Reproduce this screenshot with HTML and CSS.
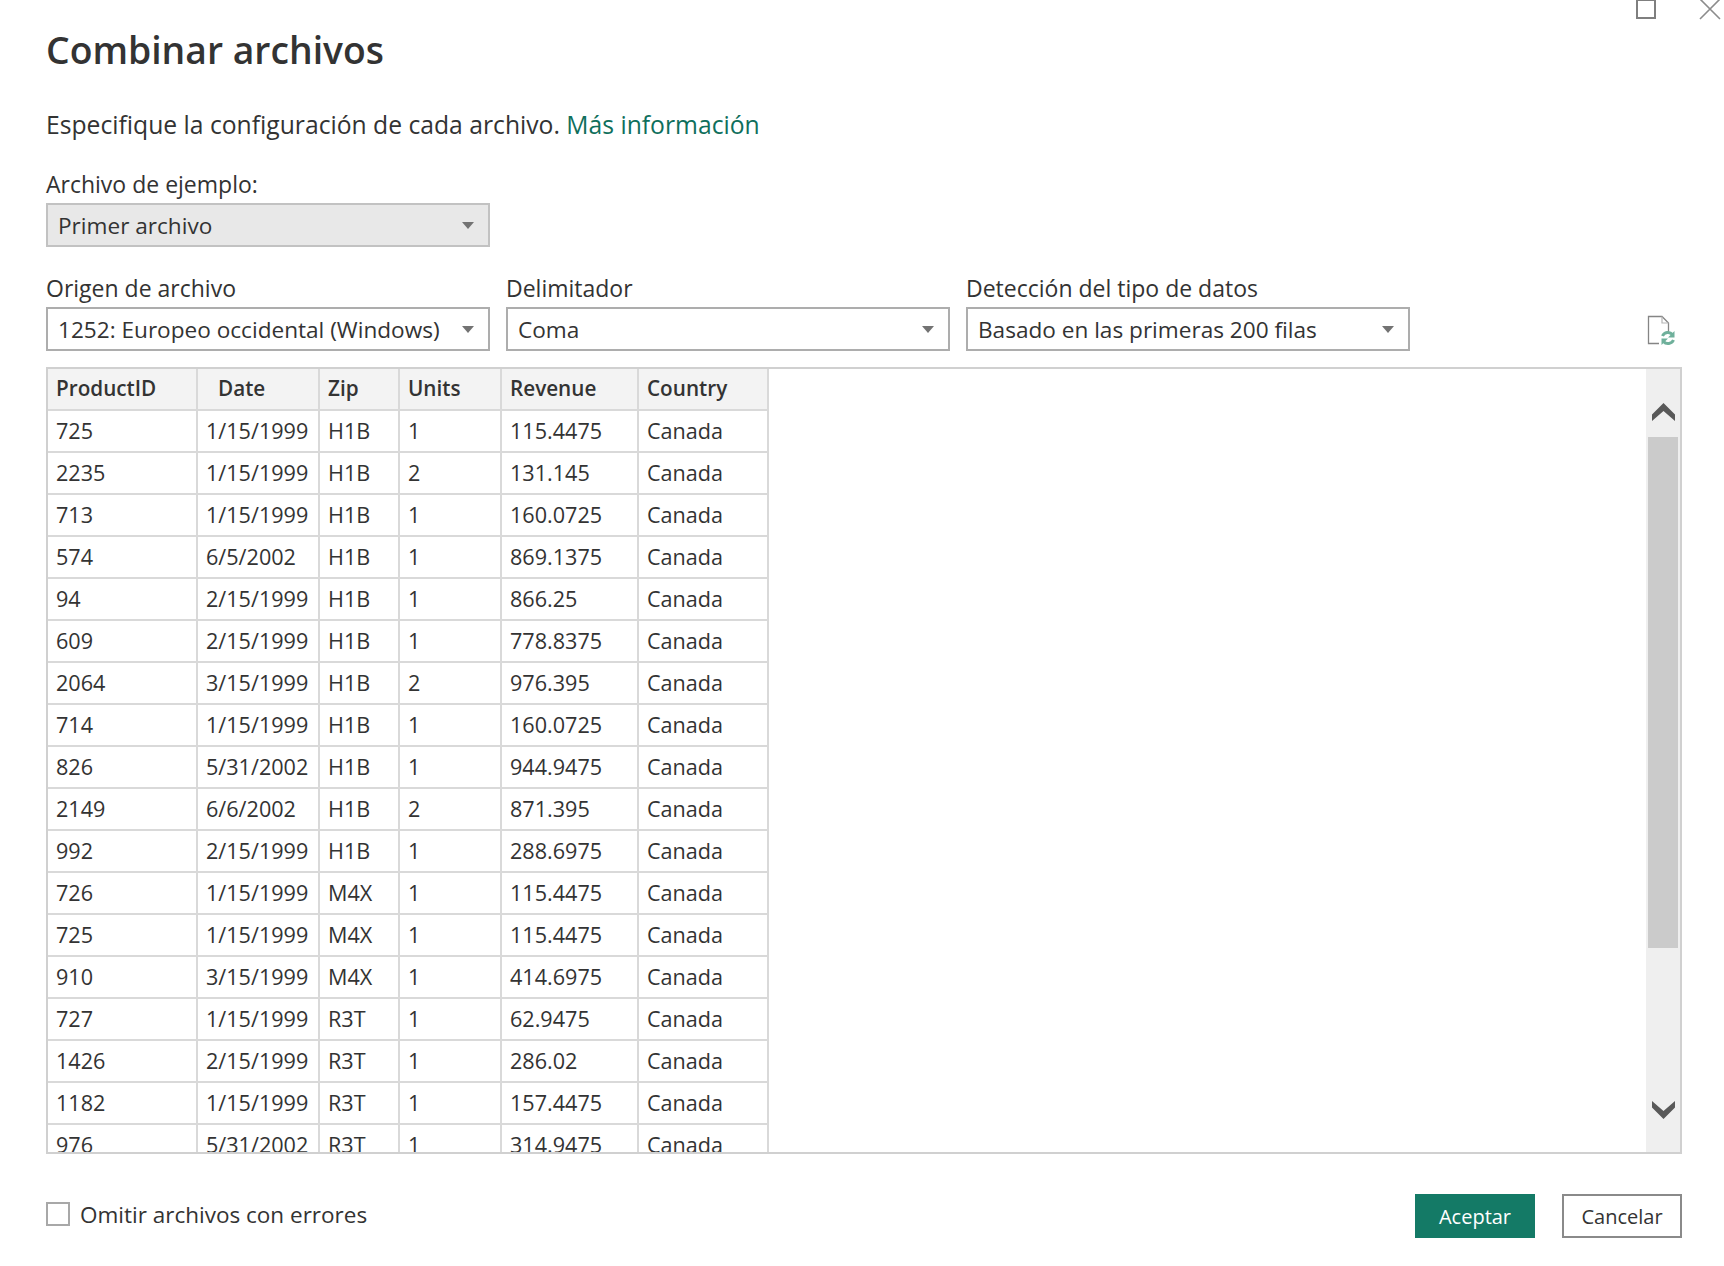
FILE: index.html
```html
<!DOCTYPE html>
<html lang="es">
  <head>
    <meta charset="UTF-8" />
    <title>Combinar archivos</title>
    <link rel="stylesheet" href="styles.css">
  </head>
  <body>
    <div class="window-bar">
      <svg class="win-icon" width="20" height="20" viewBox="0 0 20 20"><rect x="1" y="0" width="18" height="18" fill="none" stroke="#7f7f7f" stroke-width="2"/></svg>
      <svg class="win-icon" width="22" height="20" viewBox="0 0 22 20"><path d="M1 -1 L21 19 M21 -1 L1 19" fill="none" stroke="#8c8c8c" stroke-width="1.6"/></svg>
    </div>

    <main class="dialog">
      <h1 class="title">Combinar archivos</h1>
      <p class="intro">Especifique la configuración de cada archivo. <a href="#" class="link">Más información</a></p>

      <div class="field sample">
        <label class="label">Archivo de ejemplo:</label>
        <div class="select disabled"><span>Primer archivo</span><i class="caret"></i></div>
      </div>

      <div class="options">
        <div class="field">
          <label class="label">Origen de archivo</label>
          <div class="select"><span>1252: Europeo occidental (Windows)</span><i class="caret"></i></div>
        </div>
        <div class="field">
          <label class="label">Delimitador</label>
          <div class="select"><span>Coma</span><i class="caret"></i></div>
        </div>
        <div class="field">
          <label class="label">Detección del tipo de datos</label>
          <div class="select"><span>Basado en las primeras 200 filas</span><i class="caret"></i></div>
        </div>
        <svg class="refresh" width="28" height="32" viewBox="0 0 28 32">
          <path d="M12 28.5 H1.5 V1.5 H15 L21.5 8 V17" fill="none" stroke="#858585" stroke-width="1.3"/>
          <path d="M15 1.5 V8 H21.5" fill="none" stroke="#b5b5b5" stroke-width="1.2"/>
          <path d="M15.5 21 A6 6 0 0 1 25.5 19.5" fill="none" stroke="#6fb09b" stroke-width="3"/>
          <path d="M27.5 16 V22.5 H21 Z" fill="#6fb09b"/>
          <path d="M26.5 25 A6 6 0 0 1 16.5 26.5" fill="none" stroke="#6fb09b" stroke-width="3"/>
          <path d="M14.5 30 V23.5 H21 Z" fill="#6fb09b"/>
        </svg>
      </div>

      <div class="preview">
        <div class="table-wrap">
          <table class="data">
            <colgroup>
              <col class="c1"><col class="c2"><col class="c3"><col class="c4"><col class="c5"><col class="c6">
            </colgroup>
            <thead>
              <tr><th>ProductID</th><th class="date-head">Date</th><th>Zip</th><th>Units</th><th>Revenue</th><th>Country</th></tr>
            </thead>
            <tbody>
              <tr><td>725</td><td>1/15/1999</td><td>H1B</td><td>1</td><td>115.4475</td><td>Canada</td></tr>
              <tr><td>2235</td><td>1/15/1999</td><td>H1B</td><td>2</td><td>131.145</td><td>Canada</td></tr>
              <tr><td>713</td><td>1/15/1999</td><td>H1B</td><td>1</td><td>160.0725</td><td>Canada</td></tr>
              <tr><td>574</td><td>6/5/2002</td><td>H1B</td><td>1</td><td>869.1375</td><td>Canada</td></tr>
              <tr><td>94</td><td>2/15/1999</td><td>H1B</td><td>1</td><td>866.25</td><td>Canada</td></tr>
              <tr><td>609</td><td>2/15/1999</td><td>H1B</td><td>1</td><td>778.8375</td><td>Canada</td></tr>
              <tr><td>2064</td><td>3/15/1999</td><td>H1B</td><td>2</td><td>976.395</td><td>Canada</td></tr>
              <tr><td>714</td><td>1/15/1999</td><td>H1B</td><td>1</td><td>160.0725</td><td>Canada</td></tr>
              <tr><td>826</td><td>5/31/2002</td><td>H1B</td><td>1</td><td>944.9475</td><td>Canada</td></tr>
              <tr><td>2149</td><td>6/6/2002</td><td>H1B</td><td>2</td><td>871.395</td><td>Canada</td></tr>
              <tr><td>992</td><td>2/15/1999</td><td>H1B</td><td>1</td><td>288.6975</td><td>Canada</td></tr>
              <tr><td>726</td><td>1/15/1999</td><td>M4X</td><td>1</td><td>115.4475</td><td>Canada</td></tr>
              <tr><td>725</td><td>1/15/1999</td><td>M4X</td><td>1</td><td>115.4475</td><td>Canada</td></tr>
              <tr><td>910</td><td>3/15/1999</td><td>M4X</td><td>1</td><td>414.6975</td><td>Canada</td></tr>
              <tr><td>727</td><td>1/15/1999</td><td>R3T</td><td>1</td><td>62.9475</td><td>Canada</td></tr>
              <tr><td>1426</td><td>2/15/1999</td><td>R3T</td><td>1</td><td>286.02</td><td>Canada</td></tr>
              <tr><td>1182</td><td>1/15/1999</td><td>R3T</td><td>1</td><td>157.4475</td><td>Canada</td></tr>
              <tr><td>976</td><td>5/31/2002</td><td>R3T</td><td>1</td><td>314.9475</td><td>Canada</td></tr>
            </tbody>
          </table>
        </div>
        <div class="scrollbar">
          <div class="arrow up">
            <svg width="23" height="18" viewBox="0 0 23 18"><path d="M0 11.5 L11.5 0 L23 11.5 V18 L11.5 8 L0 18 Z" fill="#595959"/></svg>
          </div>
          <div class="thumb"></div>
          <div class="arrow down">
            <svg width="23" height="18" viewBox="0 0 23 18"><path d="M0 0 L11.5 10 L23 0 V6.5 L11.5 18 L0 6.5 Z" fill="#595959"/></svg>
          </div>
        </div>
      </div>

      <div class="footer">
        <label class="check"><i class="box"></i>Omitir archivos con errores</label>
        <div class="buttons">
          <button class="btn primary">Aceptar</button>
          <button class="btn">Cancelar</button>
        </div>
      </div>
    </main>
  </body>
</html>
```

FILE: styles.css
```css
html, body {
  margin: 0;
  padding: 0;
  height: 1266px;
  overflow: hidden;
  background-color: #fff;
}

body {
  font-family: "Open Sans", "Noto Sans", sans-serif;
  color: #333;
}

.window-bar {
  display: flex;
  justify-content: flex-end;
  align-items: flex-start;
  gap: 43px;
  height: 20px;
  padding-right: 3px;
}

.win-icon {
  display: block;
}

.dialog {
  padding: 0 42px 0 46px;
}

.title {
  margin: 7px 0 0;
  font-size: 37.3px;
  line-height: 46px;
  font-weight: 600;
  color: #333;
}

.intro {
  margin: 35px 0 0;
  font-size: 24.7px;
  line-height: 34px;
}

.link {
  color: #0f6f5c;
  text-decoration: none;
}

.field {
  flex: none;
  width: 444px;
}

.sample {
  margin-top: 26px;
}

.label {
  display: block;
  font-size: 23px;
  line-height: 32px;
  height: 35px;
}

.select {
  display: flex;
  align-items: center;
  justify-content: space-between;
  box-sizing: border-box;
  height: 44px;
  padding: 0 14px 0 10px;
  border: 2px solid #adadad;
  font-size: 22.6px;
  white-space: nowrap;
}

.select.disabled {
  background-color: #e8e8e8;
  border-color: #c2c2c2;
}

.caret {
  width: 0;
  height: 0;
  border-left: 6px solid transparent;
  border-right: 6px solid transparent;
  border-top: 7px solid #737373;
}

.options {
  display: flex;
  align-items: flex-start;
  gap: 16px;
  margin-top: 25px;
}

.refresh {
  flex: none;
  display: block;
  margin: 43px 0 0 221px;
}

.preview {
  display: flex;
  box-sizing: border-box;
  height: 787px;
  margin-top: 16px;
  border: 2px solid #d0d0d0;
}

.table-wrap {
  flex: 1;
  overflow: hidden;
}

.data {
  table-layout: fixed;
  width: 721px;
  border-collapse: separate;
  border-spacing: 0;
  font-size: 21.6px;
}

.c1 { width: 150px; }
.c2 { width: 122px; }
.c3 { width: 80px; }
.c4 { width: 102px; }
.c5 { width: 137px; }
.c6 { width: 130px; }

.data th,
.data td {
  box-sizing: border-box;
  height: 42px;
  padding: 0 0 2px 8px;
  text-align: left;
  white-space: nowrap;
  border-right: 2px solid #d9d9d9;
  border-bottom: 2px solid #d9d9d9;
}

.data th {
  background-color: #f3f3f3;
  font-size: 20.7px;
  font-weight: 600;
}

.data .date-head {
  padding-left: 20px;
}

.scrollbar {
  display: flex;
  flex-direction: column;
  width: 34px;
  background-color: #efefef;
}

.arrow {
  display: flex;
  justify-content: center;
  align-items: center;
}

.arrow.up {
  box-sizing: border-box;
  height: 68px;
  padding-top: 18px;
}

.arrow.down {
  flex: 1;
  align-items: flex-end;
  padding-bottom: 33px;
}

.thumb {
  height: 511px;
  margin: 0 2px;
  background-color: #cbcbcb;
}

.footer {
  display: flex;
  justify-content: space-between;
  align-items: center;
  margin-top: 40px;
}

.check {
  display: flex;
  align-items: center;
  gap: 10px;
  padding-bottom: 4px;
  font-size: 22.5px;
}

.box {
  box-sizing: border-box;
  width: 24px;
  height: 24px;
  border: 2px solid #a8a8a8;
}

.buttons {
  display: flex;
  gap: 27px;
}

.btn {
  box-sizing: border-box;
  width: 120px;
  height: 44px;
  padding: 0;
  border: 2px solid #8a8a8a;
  background-color: #fff;
  color: #333;
  font-family: inherit;
  font-size: 20px;
}

.btn.primary {
  background-color: #147a66;
  border-color: #147a66;
  color: #fff;
}
```
